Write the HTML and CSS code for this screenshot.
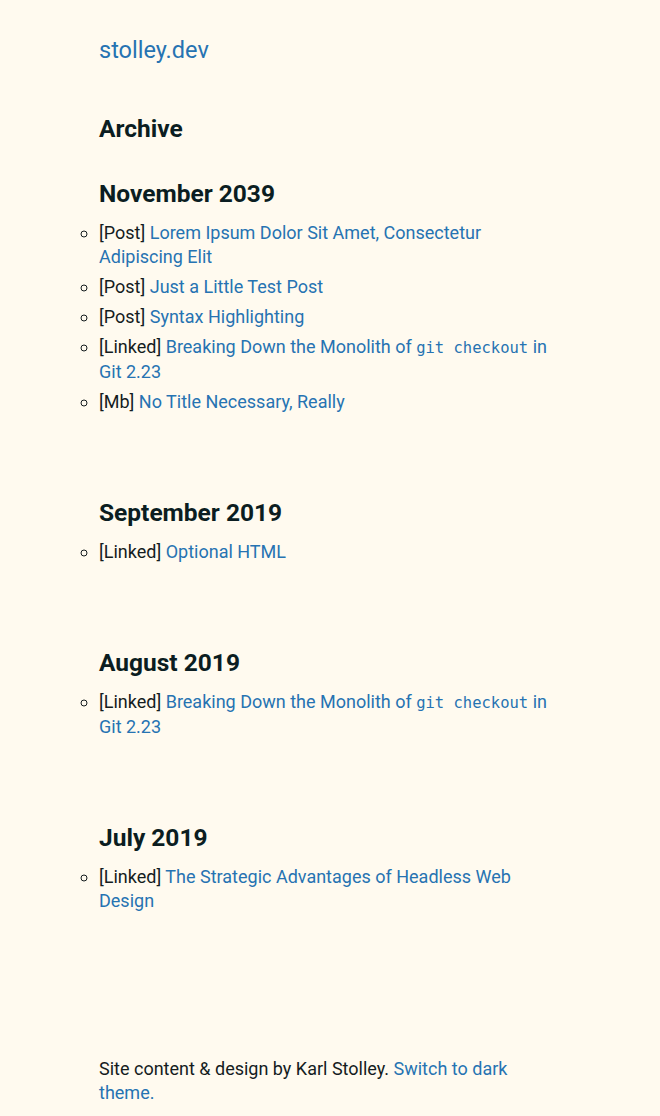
FILE: index.html
```html
<!DOCTYPE html>
<html lang="en">
<head>
<meta charset="utf-8">
<title>Archive — stolley.dev</title>
<link rel="stylesheet" href="styles.css">
</head>
<body>
<div class="page">
  <header class="site-header">
    <a class="site-title" href="#">stolley.dev</a>
  </header>
  <main>
    <h1 class="page-title">Archive</h1>
    <section class="month">
      <h2 class="month-title">November 2039</h2>
      <ul class="entries">
        <li>[Post] <a href="#">Lorem Ipsum Dolor Sit Amet, Consectetur Adipiscing Elit</a></li>
        <li>[Post] <a href="#">Just a Little Test Post</a></li>
        <li>[Post] <a href="#">Syntax Highlighting</a></li>
        <li>[Linked] <a href="#">Breaking Down the Monolith of <code>git checkout</code> in Git 2.23</a></li>
        <li>[Mb] <a href="#">No Title Necessary, Really</a></li>
      </ul>
    </section>
    <section class="month">
      <h2 class="month-title">September 2019</h2>
      <ul class="entries">
        <li>[Linked] <a href="#">Optional HTML</a></li>
      </ul>
    </section>
    <section class="month">
      <h2 class="month-title">August 2019</h2>
      <ul class="entries">
        <li>[Linked] <a href="#">Breaking Down the Monolith of <code>git checkout</code> in Git 2.23</a></li>
      </ul>
    </section>
    <section class="month">
      <h2 class="month-title">July 2019</h2>
      <ul class="entries">
        <li>[Linked] <a href="#">The Strategic Advantages of Headless Web Design</a></li>
      </ul>
    </section>
  </main>
  <footer class="site-footer">
    <p>Site content &amp; design by Karl Stolley. <a href="#">Switch to dark theme.</a></p>
  </footer>
</div>
</body>
</html>
```
FILE: styles.css
```css
html, body {
  margin: 0;
  padding: 0;
  background: #fffaef;
}
body {
  font-family: Roboto, "Noto Sans", sans-serif;
  font-size: 18px;
  line-height: 24px;
  color: #141c1e;
}
a {
  color: #2673b2;
  text-decoration: none;
}
.page {
  width: 70%;
  margin: 0 auto;
}
.site-header {
  padding-top: 36px;
}
.site-title {
  font-size: 23.5px;
  line-height: 28px;
  display: inline-block;
}
.page-title, .month-title {
  font-size: 24.5px;
  line-height: 28px;
  font-weight: 700;
  color: #0b1d21;
  margin: 0;
}
.page-title {
  margin-top: 51px;
}
.month {
  margin-top: 85px;
}
.month:first-of-type {
  margin-top: 37px;
}
.entries {
  list-style: circle outside;
  margin: 13px 0 0;
  padding: 0;
}
.entries li {
  margin-bottom: 6px;
}
.entries li:last-child {
  margin-bottom: 0;
}
code {
  font-family: "DejaVu Sans Mono", monospace;
  font-size: 15.5px;
}
.site-footer {
  margin-top: 144px;
}
.site-footer p {
  margin: 0;
}
```
